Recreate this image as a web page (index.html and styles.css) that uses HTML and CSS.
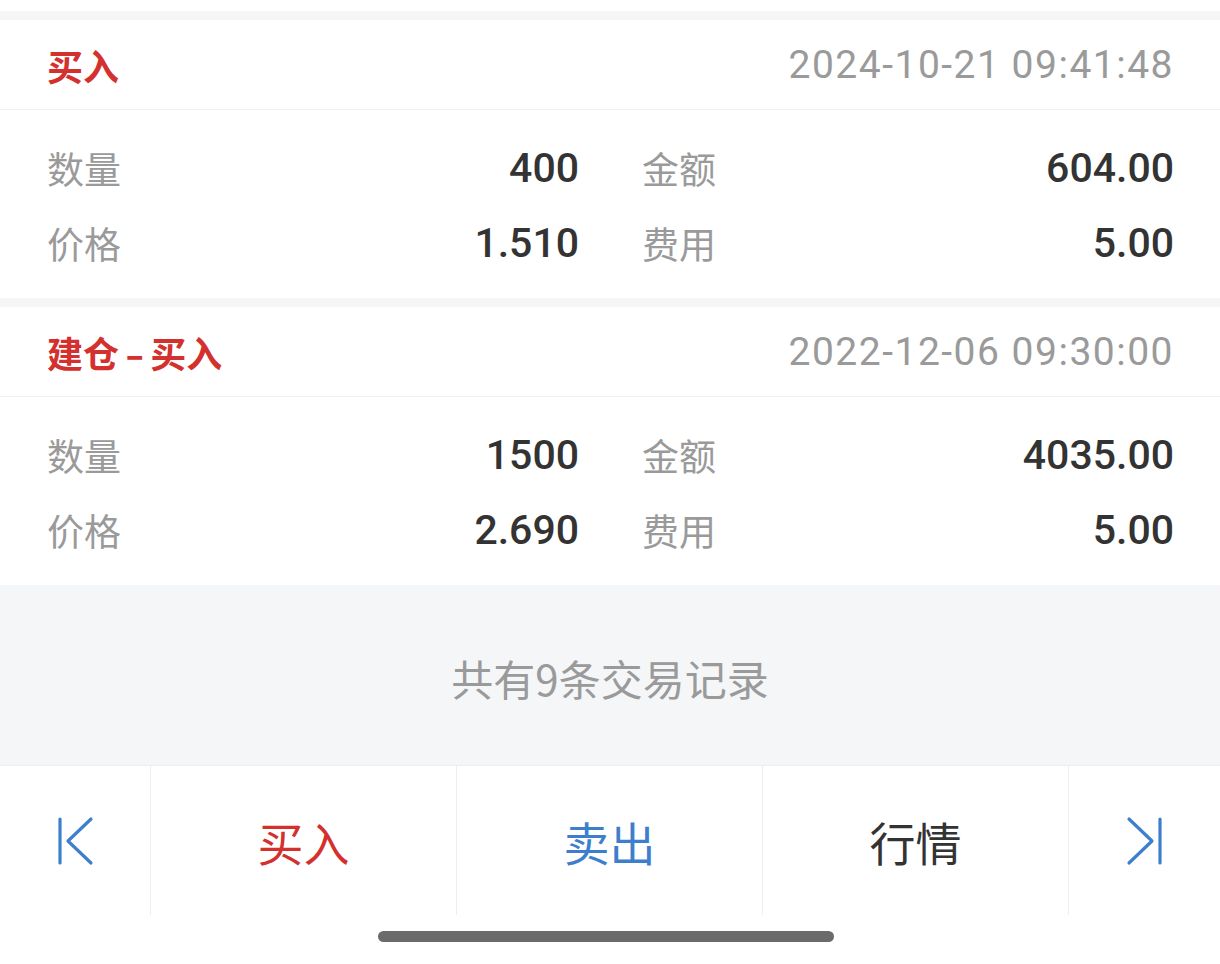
FILE: index.html
```html
<!DOCTYPE html>
<html lang="zh-CN">
<head>
<meta charset="utf-8">
<link rel="stylesheet" href="styles.css">
</head>
<body>
<div class="page">
  <div class="top-pad"></div>
  <div class="gap"></div>
  <section class="card">
    <div class="card-head">
      <span class="type">买入</span>
      <span class="time">2024-10-21 09:41:48</span>
    </div>
    <div class="card-body">
      <div class="row">
        <div class="cell"><span class="label">数量</span><span class="value">400</span></div>
        <div class="cell"><span class="label">金额</span><span class="value">604.00</span></div>
      </div>
      <div class="row">
        <div class="cell"><span class="label">价格</span><span class="value">1.510</span></div>
        <div class="cell"><span class="label">费用</span><span class="value">5.00</span></div>
      </div>
    </div>
  </section>
  <div class="gap"></div>
  <section class="card">
    <div class="card-head">
      <span class="type">建仓<span class="dash">-</span>买入</span>
      <span class="time">2022-12-06 09:30:00</span>
    </div>
    <div class="card-body">
      <div class="row">
        <div class="cell"><span class="label">数量</span><span class="value">1500</span></div>
        <div class="cell"><span class="label">金额</span><span class="value">4035.00</span></div>
      </div>
      <div class="row">
        <div class="cell"><span class="label">价格</span><span class="value">2.690</span></div>
        <div class="cell"><span class="label">费用</span><span class="value">5.00</span></div>
      </div>
    </div>
  </section>
  <div class="summary">共有9条交易记录</div>
  <nav class="bottom-nav">
    <div class="nav-item nav-first">
      <svg class="nav-icon" width="40" height="50" viewBox="0 0 40 50" fill="none" stroke="#3e7fcd" stroke-width="3.2" stroke-linecap="round" stroke-linejoin="round">
        <line x1="5" y1="3" x2="5" y2="47"/>
        <polyline points="36,3 13,25 36,47"/>
      </svg>
    </div>
    <div class="nav-item nav-main buy">买入</div>
    <div class="nav-item nav-main sell">卖出</div>
    <div class="nav-item nav-main quote">行情</div>
    <div class="nav-item nav-last">
      <svg class="nav-icon" width="40" height="50" viewBox="0 0 40 50" fill="none" stroke="#3e7fcd" stroke-width="3.2" stroke-linecap="round" stroke-linejoin="round">
        <polyline points="4,3 27,25 4,47"/>
        <line x1="35" y1="3" x2="35" y2="47"/>
      </svg>
    </div>
  </nav>
  <div class="home-area"><div class="home-bar"></div></div>
</div>
</body>
</html>
```
FILE: styles.css
```css
html, body {
  margin: 0;
  padding: 0;
  background: #ffffff;
}
body {
  font-family: Roboto, "Noto Sans CJK SC", "Noto Sans", sans-serif;
}
.page {
  width: 1220px;
  height: 964px;
  display: flex;
  flex-direction: column;
  overflow: hidden;
}
.top-pad {
  height: 11px;
  background: #ffffff;
}
.gap {
  height: 9px;
  background: #f5f6f8;
}
.card {
  background: #ffffff;
}
.card-head {
  height: 90px;
  box-sizing: border-box;
  border-bottom: 1px solid #f0f0f0;
  padding: 0 47px;
  display: flex;
  align-items: center;
  justify-content: space-between;
}
.type {
  color: #d3302e;
  font-size: 36px;
  font-weight: 700;
  font-family: "Noto Sans CJK SC", sans-serif;
}
.dash {
  display: inline-block;
  padding: 0 6px;
  transform: scaleX(1.5);
  margin: 0 3px;
}
.time {
  color: #9a9a9a;
  font-size: 39px;
  letter-spacing: 1.5px;
  margin-right: -1px;
}
.card-body {
  padding: 20px 47px 18px;
  display: flex;
  flex-direction: column;
}
.row {
  height: 75px;
  display: grid;
  grid-template-columns: 1fr 1fr;
  column-gap: 64px;
  align-items: center;
}
.cell {
  display: flex;
  justify-content: space-between;
  align-items: center;
}
.label {
  color: #9a9a9a;
  font-size: 37px;
  font-family: "Noto Sans CJK SC", sans-serif;
}
.value {
  color: #333333;
  font-size: 41px;
  font-weight: 500;
  margin-right: -1px;
}
.summary {
  height: 180px;
  background: #f5f6f8;
  display: flex;
  align-items: center;
  justify-content: center;
  padding-top: 4px;
  box-sizing: border-box;
  color: #9a9a9a;
  font-size: 42px;
  font-family: "Noto Sans CJK SC", sans-serif;
}
.bottom-nav {
  height: 149px;
  display: flex;
  background: #ffffff;
  border-top: 1px solid #eeeeee;
}
.nav-item {
  display: flex;
  align-items: center;
  justify-content: center;
  font-family: "Noto Sans CJK SC", sans-serif;
  font-size: 46px;
  box-sizing: border-box;
}
.nav-first {
  width: 150px;
}
.nav-last {
  width: 152px;
  border-left: 1px solid #eeeeee;
}
.nav-main {
  width: 306px;
  border-left: 1px solid #eeeeee;
  padding-top: 1px;
}
.buy { color: #d3302e; }
.sell { color: #3e7fcd; }
.quote { color: #333333; }
.home-area {
  flex: 1;
  display: flex;
  justify-content: center;
  padding-top: 16px;
  padding-right: 8px;
  background: #ffffff;
}
.home-bar {
  width: 456px;
  height: 11px;
  border-radius: 6px;
  background: #6b6b6b;
}
```
